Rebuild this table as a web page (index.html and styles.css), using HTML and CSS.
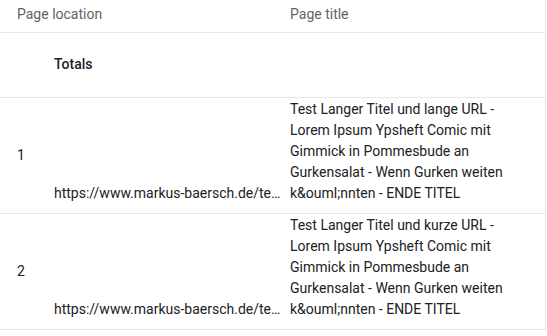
FILE: index.html
```
<!DOCTYPE html>
<html lang="en">
<head>
    <meta charset="UTF-8">
    <meta name="viewport" content="width=device-width, initial-scale=1.0">
    <title>Pages and screens</title>
    <link rel="stylesheet" href="styles.css">
</head>
<body>
    <table class="report-table">
        <colgroup>
            <col class="col-index">
            <col class="col-location">
            <col class="col-title">
        </colgroup>
        <thead>
            <tr class="header-row">
                <th class="head-location" colspan="2">Page location</th>
                <th class="head-title">Page title</th>
            </tr>
        </thead>
        <tbody>
            <tr class="totals-row">
                <td class="cell-index"></td>
                <td class="cell-location totals-label">Totals</td>
                <td class="cell-title"></td>
            </tr>
            <tr class="data-row">
                <td class="cell-index">1</td>
                <td class="cell-location"><div class="url">https://www.markus-baersch.de/test-langer-titel-und-lange-url-lorem-ipsum</div></td>
                <td class="cell-title"><div class="title">Test Langer Titel und lange URL - Lorem Ipsum Ypsheft Comic mit Gimmick in Pommesbude an Gurkensalat - Wenn Gurken weiten k&amp;ouml;nnten - ENDE TITEL</div></td>
            </tr>
            <tr class="data-row">
                <td class="cell-index">2</td>
                <td class="cell-location"><div class="url">https://www.markus-baersch.de/test-kurz</div></td>
                <td class="cell-title"><div class="title">Test Langer Titel und kurze URL - Lorem Ipsum Ypsheft Comic mit Gimmick in Pommesbude an Gurkensalat - Wenn Gurken weiten k&amp;ouml;nnten - ENDE TITEL</div></td>
            </tr>
        </tbody>
    </table>
</body>
</html>
```

FILE: styles.css
```
:root {
    --text-color: #202124;
    --muted-color: #5f6368;
    --border-color: #e6e6e6;
}

body {
    margin: 0;
    background-color: #ffffff;
    font-family: Roboto, "Noto Sans", Arial, sans-serif;
    font-size: 14px;
    color: var(--text-color);
}

.report-table {
    border-collapse: collapse;
    table-layout: fixed;
    width: 545px;
    border-right: 1px solid var(--border-color);
}

.col-index { width: 54px; }
.col-location { width: 236px; }
.col-title { width: 255px; }

.report-table th,
.report-table td {
    padding: 0;
    border-bottom: 1px solid var(--border-color);
    line-height: 21px;
    text-align: left;
}

/* header row */
.report-table th {
    height: 32px;
    box-sizing: border-box;
    padding-top: 4px;
    font-weight: 400;
    color: var(--muted-color);
    vertical-align: top;
}

.head-location {
    padding-left: 17px !important;
}

/* totals row */
.totals-row td {
    height: 64px;
    vertical-align: middle;
}

.totals-label {
    font-weight: 500;
}

/* data rows */
.data-row td {
    height: 115px;
    box-sizing: border-box;
    padding-top: 1px;
    padding-bottom: 9px;
}

.cell-index {
    padding-left: 17px !important;
}

.data-row .cell-index {
    vertical-align: middle;
    padding-top: 0;
    padding-bottom: 0;
}

.cell-location {
    padding-right: 7px !important;
}

.data-row .cell-location {
    vertical-align: bottom;
}

.url {
    white-space: nowrap;
    overflow: hidden;
    text-overflow: ellipsis;
}

.cell-title {
    vertical-align: top;
}

.title {
    max-width: 230px;
}
```
